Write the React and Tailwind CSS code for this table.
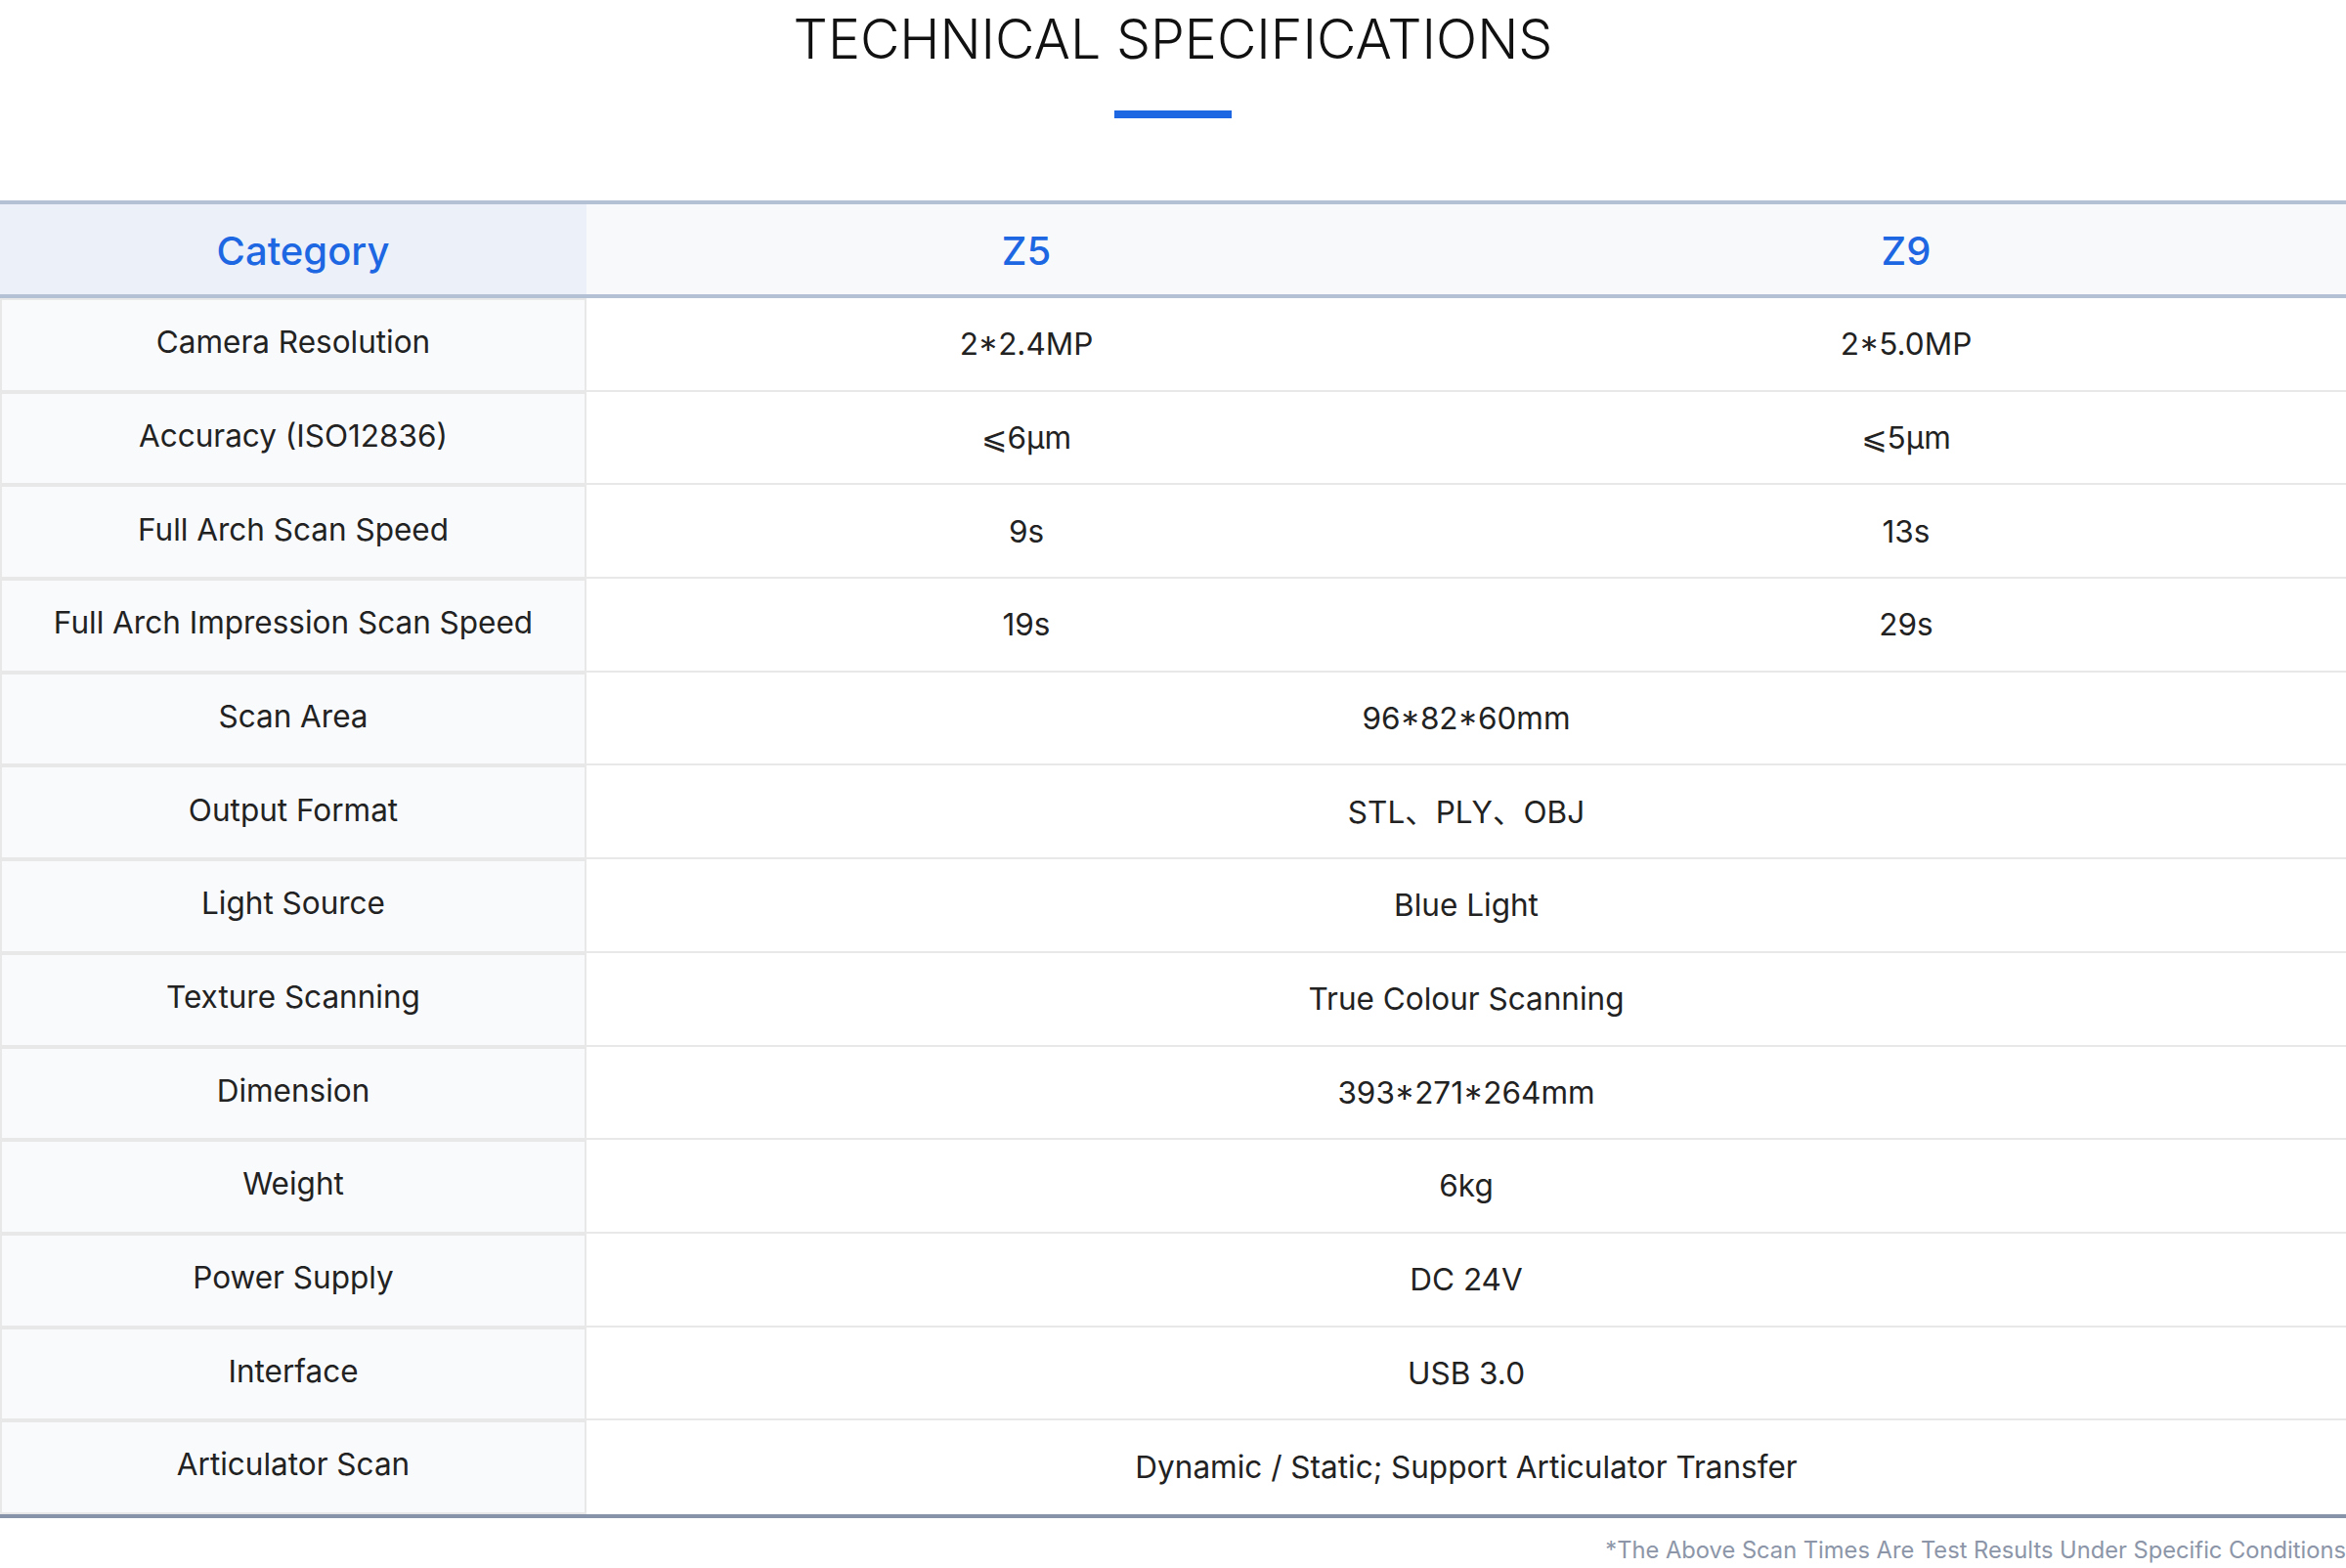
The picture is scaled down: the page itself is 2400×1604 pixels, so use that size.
import React from 'react'

const rows = [
  { label: 'Camera Resolution', z5: '2*2.4MP', z9: '2*5.0MP' },
  { label: 'Accuracy (ISO12836)', z5: '⩽6μm', z9: '⩽5μm' },
  { label: 'Full Arch Scan Speed', z5: '9s', z9: '13s' },
  { label: 'Full Arch Impression Scan Speed', z5: '19s', z9: '29s' },
  { label: 'Scan Area', both: '96*82*60mm' },
  { label: 'Output Format', both: 'STL、PLY、OBJ' },
  { label: 'Light Source', both: 'Blue Light' },
  { label: 'Texture Scanning', both: 'True Colour Scanning' },
  { label: 'Dimension', both: '393*271*264mm' },
  { label: 'Weight', both: '6kg' },
  { label: 'Power Supply', both: 'DC 24V' },
  { label: 'Interface', both: 'USB 3.0' },
  { label: 'Articulator Scan', both: 'Dynamic / Static; Support Articulator Transfer' },
]

const SpecRow = ({ row, last }) => {
  const cellBorder = last ? '' : 'border-b-2 border-[#e8e8e8]'
  return (
    <div className="flex h-[95.7px]">
      <div className="w-[600px] shrink-0 border-2 border-[#e8e8e8] bg-[#f9fafc] flex items-center justify-center pb-[6px]">
        {row.label}
      </div>
      {row.both ? (
        <div className={`flex-1 flex items-center justify-center ${cellBorder}`}>{row.both}</div>
      ) : (
        <>
          <div className={`flex-1 flex items-center justify-center ${cellBorder}`}>{row.z5}</div>
          <div className={`flex-1 flex items-center justify-center ${cellBorder}`}>{row.z9}</div>
        </>
      )}
    </div>
  )
}

export default function App() {
  return (
    <div className="w-[2400px] min-h-[1604px] bg-white font-['Inter','Noto_Sans_CJK_SC','DejaVu_Sans',sans-serif] text-[#222]">
      <h1 className="pt-[12px] text-center text-[55.5px] leading-none font-light text-[#111]">
        TECHNICAL SPECIFICATIONS
      </h1>
      <div className="mx-auto mt-[45.5px] w-[120px] h-[8px] bg-[#1e67e3]" />

      <div className="mt-[84px] border-t-4 border-b-4 border-t-[#b4c0d4] border-b-[#8793a8] text-[31.5px]">
        {/* header */}
        <div className="flex h-[96px] pt-[4px] border-b-4 border-[#b4c0d4] bg-[#f8f9fb] text-[40px] font-medium text-[#1e67e3]">
          <div className="w-[600px] shrink-0 -mt-[4px] bg-[#ecf1f9] flex items-center justify-center pl-[20px] pt-[4px]">
            Category
          </div>
          <div className="flex-1 flex items-center justify-center">Z5</div>
          <div className="flex-1 flex items-center justify-center">Z9</div>
        </div>
        {rows.map((row, i) => (
          <SpecRow key={row.label} row={row} last={i === rows.length - 1} />
        ))}
      </div>

      <p className="mt-[21px] text-right text-[23.7px] leading-none text-[#8c96a8]">
        *The Above Scan Times Are Test Results Under Specific Conditions
      </p>
    </div>
  )
}
